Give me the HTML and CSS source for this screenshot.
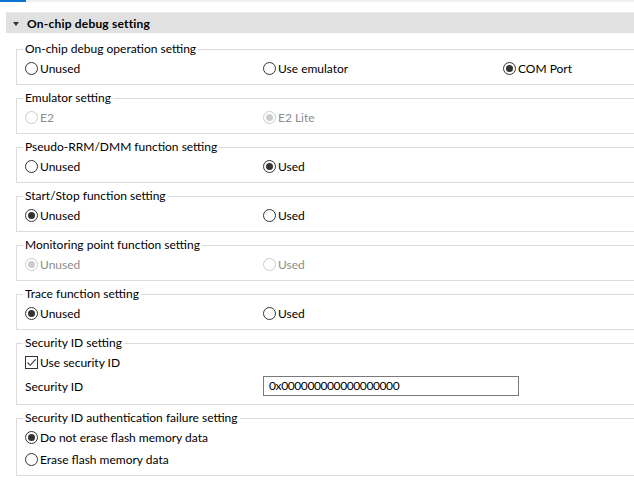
FILE: index.html
```html
<!DOCTYPE html>
<html>
<head>
<meta charset="utf-8">
<link rel="stylesheet" href="styles.css">
</head>
<body>
<div class="topbar"><div class="tab"></div></div>
<div class="section-head">
  <span class="twisty"></span>
  <span class="section-title">On-chip debug setting</span>
</div>
<div class="groups">
  <fieldset class="group">
    <legend>On-chip debug operation setting</legend>
    <div class="row cols3">
      <label class="opt"><span class="radio"></span>Unused</label>
      <label class="opt"><span class="radio"></span>Use emulator</label>
      <label class="opt"><span class="radio on"></span>COM Port</label>
    </div>
  </fieldset>
  <fieldset class="group">
    <legend>Emulator setting</legend>
    <div class="row cols3">
      <label class="opt off"><span class="radio"></span>E2</label>
      <label class="opt off"><span class="radio on"></span>E2 Lite</label>
    </div>
  </fieldset>
  <fieldset class="group">
    <legend>Pseudo-RRM/DMM function setting</legend>
    <div class="row cols3">
      <label class="opt"><span class="radio"></span>Unused</label>
      <label class="opt"><span class="radio on"></span>Used</label>
    </div>
  </fieldset>
  <fieldset class="group">
    <legend>Start/Stop function setting</legend>
    <div class="row cols3">
      <label class="opt"><span class="radio on"></span>Unused</label>
      <label class="opt"><span class="radio"></span>Used</label>
    </div>
  </fieldset>
  <fieldset class="group">
    <legend>Monitoring point function setting</legend>
    <div class="row cols3">
      <label class="opt off"><span class="radio on"></span>Unused</label>
      <label class="opt off"><span class="radio"></span>Used</label>
    </div>
  </fieldset>
  <fieldset class="group">
    <legend>Trace function setting</legend>
    <div class="row cols3">
      <label class="opt"><span class="radio on"></span>Unused</label>
      <label class="opt"><span class="radio"></span>Used</label>
    </div>
  </fieldset>
  <fieldset class="group">
    <legend>Security ID setting</legend>
    <div class="row">
      <label class="opt"><span class="check"><svg width="11" height="11" viewBox="0 0 11 11"><path d="M1.5 5.5 L4.2 8.3 L9.6 2.4" fill="none" stroke="#333" stroke-width="1.1"/></svg></span>Use security ID</label>
    </div>
    <div class="row tall cols3">
      <span class="label">Security ID</span>
      <div class="textbox">0x000000000000000000</div>
    </div>
  </fieldset>
  <fieldset class="group">
    <legend>Security ID authentication failure setting</legend>
    <div class="row">
      <label class="opt"><span class="radio on"></span>Do not erase flash memory data</label>
    </div>
    <div class="row">
      <label class="opt"><span class="radio"></span>Erase flash memory data</label>
    </div>
  </fieldset>
</div>
</body>
</html>
```
FILE: styles.css
```css
html, body {
  margin: 0;
  padding: 0;
  background: #ffffff;
  overflow: hidden;
}
body {
  font-family: Lato, "Noto Sans", sans-serif;
  font-size: 12px;
  color: #000;
  width: 634px;
  height: 496px;
}
.topbar {
  height: 2px;
  background: #f0f0f0;
}
.tab {
  width: 26px;
  height: 2px;
  background: #0a72d2;
}
.section-head {
  margin: 10px 0 0 6px;
  border-top: 1px solid #ececec;
  height: 20px;
  background: #e1e1e1;
  display: flex;
  align-items: center;
}
.twisty {
  width: 0;
  height: 0;
  border-left: 3.5px solid transparent;
  border-right: 3.5px solid transparent;
  border-top: 4px solid #333;
  margin: 1px 0 0 7px;
}
.section-title {
  font-weight: bold;
  margin-left: 8px;
  letter-spacing: 0.2px;
}
.groups {
  padding: 8px 0 0 16px;
  display: flex;
  flex-direction: column;
  gap: 5px;
}
.group {
  margin: 0;
  border: 1px solid #dcdcdc;
  border-right: none;
  padding: 0 0 5px 8px;
  min-width: 0;
}
.group legend {
  padding: 0 2px;
  margin-left: -2px;
  line-height: 16px;
}
.row {
  height: 22px;
  display: flex;
  align-items: center;
}
.row.tall {
  height: 26px;
}
.cols3 {
  display: grid;
  grid-template-columns: 238px 240px 1fr;
  align-items: center;
}
.opt {
  display: flex;
  align-items: center;
  gap: 2px;
  white-space: nowrap;
}
.opt.off {
  color: #8c8c8c;
}
.radio {
  width: 11px;
  height: 11px;
  border: 1px solid #333;
  border-radius: 50%;
  display: flex;
  align-items: center;
  justify-content: center;
  flex: none;
}
.radio.on::after {
  content: "";
  width: 7px;
  height: 7px;
  border-radius: 50%;
  background: #333;
}
.off .radio {
  border-color: #cccccc;
}
.off .radio.on::after {
  background: #cccccc;
}
.check {
  width: 11px;
  height: 11px;
  border: 1px solid #333;
  display: flex;
  align-items: center;
  justify-content: center;
  flex: none;
}
.check svg {
  display: block;
}
.textbox {
  width: 249px;
  height: 18px;
  border: 1px solid #7a7a7a;
  padding-left: 5px;
  line-height: 18px;
  letter-spacing: -0.4px;
}
```
